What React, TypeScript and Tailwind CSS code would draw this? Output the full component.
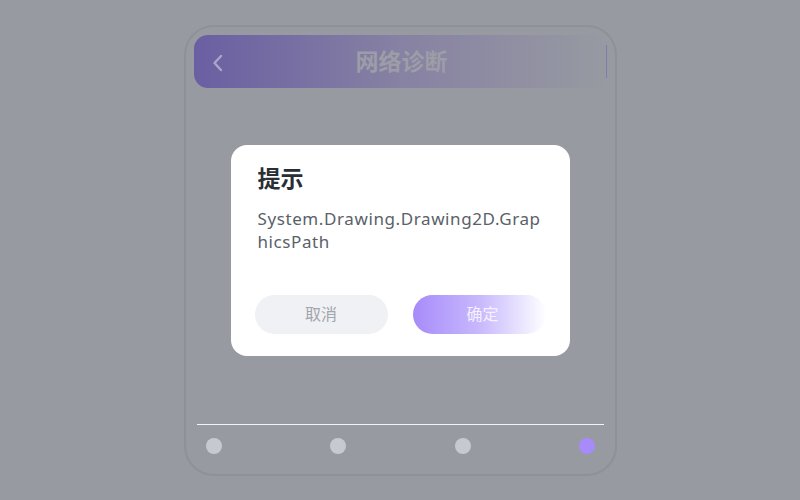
import React from "react";

export default function App() {
  const font = { fontFamily: '"Noto Sans", "Noto Sans CJK SC", sans-serif' };
  return (
    <div className="relative w-[800px] h-[500px] bg-[#979aa1] overflow-hidden" style={font}>
      <div className="absolute left-[184px] top-[25px] w-[433px] h-[451px] rounded-[30px] border-2 border-[#8e9198] flex flex-col px-[8px] pt-[8px] pb-[20px]">
        <div className="relative h-[53px] rounded-[14px] bg-gradient-to-r from-[#6a5fa2] via-[#8781a3] to-[#979aa1] flex items-center justify-center">
          <svg className="absolute left-[17px] top-[19px]" width="14" height="18" viewBox="0 0 14 18" fill="none">
            <path d="M10 2 L3.5 9 L10 16" stroke="#aaa6c4" strokeWidth="2.4" strokeLinecap="round" strokeLinejoin="round" />
          </svg>
          <span className="pl-[2px] text-[23px] font-bold text-[#9c9da7] leading-none">网络诊断</span>
          <div className="absolute right-[0px] top-[10px] w-[1.5px] h-[33px] bg-[#8179b0]" />
        </div>
        <div className="flex-1" />
        <div className="mx-[3px] h-[1.5px] bg-[#f4f4f6]" />
        <div className="flex justify-between px-[12px] pt-[13px]">
          <div className="w-4 h-4 rounded-full bg-[#c7c9d0]" />
          <div className="w-4 h-4 rounded-full bg-[#c7c9d0]" />
          <div className="w-4 h-4 rounded-full bg-[#c7c9d0]" />
          <div className="w-4 h-4 rounded-full bg-[#a78bfa]" />
        </div>
      </div>

      <div className="absolute inset-0 flex items-center justify-center">
        <div className="w-[339px] h-[211px] bg-white rounded-[16px] flex flex-col pt-[18px] pb-[22px] px-[24px]">
          <div className="pl-[3px] text-[23px] font-bold text-[#2a2e35] leading-[30px]">提示</div>
          <div className="pl-[3px] mt-[14px] text-[17px] tracking-[0.6px] text-[#5a5f69] leading-[23px] break-all">
            System.Drawing.Drawing2D.GraphicsPath
          </div>
          <div className="flex-1" />
          <div className="flex justify-between">
            <div className="w-[133px] h-[39px] rounded-full bg-[#f0f1f4] flex items-center justify-center text-[16px] text-[#a2a5ad]">
              取消
            </div>
            <div className="w-[133px] h-[39px] rounded-full bg-gradient-to-r from-[#a78bfa] via-[#c8b8fc] to-[#ffffff] flex items-center justify-center pl-[7px] text-[16px] text-[#f5f2ff]">
              确定
            </div>
          </div>
        </div>
      </div>
    </div>
  );
}
